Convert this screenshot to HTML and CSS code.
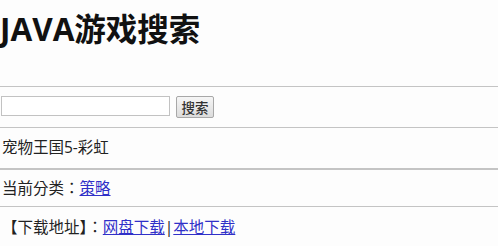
FILE: index.html
```html
<!DOCTYPE html>
<html lang="zh-TW">
<head>
<meta charset="utf-8">
<title>JAVA游戏搜索</title>
<link rel="stylesheet" href="styles.css">
</head>
<body>
<h1 class="site-title" lang="zh-CN">JAVA游戏搜索</h1>
<form class="section search-row">
  <input class="search-input" type="text">
  <button class="search-btn" type="button" lang="zh-CN">搜索</button>
</form>
<div class="section game-name">宠物王国5-彩虹</div>
<div class="section category thick">当前分类：<a href="#">策略</a></div>
<div class="section downloads">【下载地址】：<a href="#">网盘下载</a>|<a href="#">本地下载</a></div>
</body>
</html>
```
FILE: styles.css
```css
html, body {
  margin: 0;
  padding: 0;
  background: #fdfdfd;
}
body {
  font-family: "Open Sans", "Noto Sans CJK TC", sans-serif;
  color: #222;
  font-size: 15.5px;
}
.site-title {
  margin: 0;
  padding: 11px 0 39px 0;
  font-size: 31.5px;
  line-height: 36px;
  font-weight: bold;
  color: #111;
  font-family: "Open Sans", "Noto Sans CJK SC", sans-serif;
}
.section {
  border-top: 1px solid #c4c4c4;
  margin: 0;
}
.search-row {
  display: flex;
  align-items: flex-start;
  gap: 6px;
  padding: 9px 0 9px 1px;
  height: 22px;
}
.search-input {
  box-sizing: border-box;
  width: 169px;
  height: 20px;
  border: 1px solid #c2c2c2;
  background: #fff;
  margin: 0;
  padding: 0;
}
.search-btn {
  box-sizing: border-box;
  width: 38px;
  height: 22px;
  margin: 0;
  padding: 0;
  border: 1px solid #a8a8a8;
  border-radius: 2px;
  background: linear-gradient(#f6f6f6, #dcdcdc);
  font-family: "Noto Sans CJK SC", sans-serif;
  font-size: 13.5px;
  font-weight: 500;
  color: #333;
  line-height: 20px;
}
.game-name {
  padding: 9px 0 11px 2px;
  line-height: 20px;
}
.category {
  border-top: 2px solid #c4c4c4;
  padding: 8px 0 8px 2px;
  line-height: 20px;
}
.downloads {
  padding: 10px 0 10px 2px;
  line-height: 20px;
}
a {
  color: #3030c8;
  text-decoration: underline;
}
```
